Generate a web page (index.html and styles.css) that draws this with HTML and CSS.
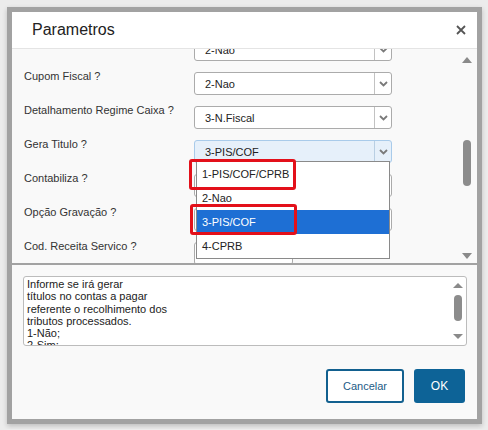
FILE: index.html
```html
<!DOCTYPE html>
<html lang="pt-BR">
<head>
    <meta charset="UTF-8">
    <meta name="viewport" content="width=device-width, initial-scale=1.0">
    <title>Parametros</title>
    <link rel="stylesheet" href="styles.css">
</head>
<body>
    <div class="dialog">
        <div class="dialog-header">
            <span class="dialog-title">Parametros</span>
            <svg class="close" width="10" height="10" viewBox="0 0 10 10"><path d="M1 1L9 9M9 1L1 9" stroke="#555" stroke-width="1.8"/></svg>
        </div>

        <div class="params">
            <div class="fields">
                <div class="field">
                    <label></label>
                    <div class="select"><span class="value">2-Nao</span><span class="caret"><svg width="9" height="6" viewBox="0 0 9 6"><path d="M1 1L4.5 4.5L8 1" fill="none" stroke="#7a7a7a" stroke-width="1.8"/></svg></span></div>
                </div>
                <div class="field">
                    <label>Cupom Fiscal ?</label>
                    <div class="select"><span class="value">2-Nao</span><span class="caret"><svg width="9" height="6" viewBox="0 0 9 6"><path d="M1 1L4.5 4.5L8 1" fill="none" stroke="#7a7a7a" stroke-width="1.8"/></svg></span></div>
                </div>
                <div class="field">
                    <label>Detalhamento Regime Caixa ?</label>
                    <div class="select"><span class="value">3-N.Fiscal</span><span class="caret"><svg width="9" height="6" viewBox="0 0 9 6"><path d="M1 1L4.5 4.5L8 1" fill="none" stroke="#7a7a7a" stroke-width="1.8"/></svg></span></div>
                </div>
                <div class="field">
                    <label>Gera Titulo ?</label>
                    <div class="select focused"><span class="value">3-PIS/COF</span><span class="caret"><svg width="9" height="6" viewBox="0 0 9 6"><path d="M1 1L4.5 4.5L8 1" fill="none" stroke="#7a7a7a" stroke-width="1.8"/></svg></span>
                        <!-- open option list -->
                        <ul class="options">
                            <li>1-PIS/COF/CPRB</li>
                            <li>2-Nao</li>
                            <li class="selected">3-PIS/COF</li>
                            <li>4-CPRB</li>
                            <span class="mark mark-1"></span>
                            <span class="mark mark-3"></span>
                        </ul>
                    </div>
                </div>
                <div class="field">
                    <label>Contabiliza ?</label>
                    <div class="select"><span class="value"></span><span class="caret"><svg width="9" height="6" viewBox="0 0 9 6"><path d="M1 1L4.5 4.5L8 1" fill="none" stroke="#7a7a7a" stroke-width="1.8"/></svg></span></div>
                </div>
                <div class="field">
                    <label>Opção Gravação ?</label>
                    <div class="select"><span class="value"></span><span class="caret"><svg width="9" height="6" viewBox="0 0 9 6"><path d="M1 1L4.5 4.5L8 1" fill="none" stroke="#7a7a7a" stroke-width="1.8"/></svg></span></div>
                </div>
                <div class="field">
                    <label>Cod. Receita Servico ?</label>
                    <div class="input short"></div>
                </div>
            </div>
            <div class="vscroll">
                <span class="arr-up"></span>
                <span class="thumb"></span>
                <span class="arr-down"></span>
            </div>
        </div>

        <div class="dialog-footer">
            <div class="help">
                <div class="help-text">Informe se irá gerar<br>títulos no contas a pagar<br>referente o recolhimento dos<br>tributos processados.<br>1-Não;<br>2-Sim;</div>
                <div class="vscroll small">
                    <span class="arr-up"></span>
                    <span class="thumb"></span>
                    <span class="arr-down"></span>
                </div>
            </div>
            <div class="actions">
                <button class="btn btn-outline">Cancelar</button>
                <button class="btn btn-primary">OK</button>
            </div>
        </div>
    </div>
</body>
</html>
```

FILE: styles.css
```css
body {
    margin: 0;
    padding: 7px 6px 5px 7px;
    background: #ececec;
    font-family: "Liberation Sans", Arial, sans-serif;
    font-size: 11px;
    color: #222;
}
.dialog {
    width: 465px;
    border: 5px solid #a2a2a2;
    background: #f9f9f9;
    box-shadow: 0 2px 5px rgba(0,0,0,0.2);
}
.dialog-header {
    height: 36px;
    background: #fff;
    border-bottom: 1px solid #e4e4e4;
    display: flex;
    align-items: center;
    justify-content: space-between;
    padding: 0 11px 0 20px;
}
.dialog-title { font-size: 16px; color: #222; }

/* scrolled parameter list */
.params {
    height: 214px;
    display: flex;
    overflow: hidden;
    border-bottom: 2px solid #a2a2a2;
}
.fields {
    flex: 1;
    margin-top: -14px;
    padding-left: 12px;
}
.field {
    height: 34px;
    display: flex;
    align-items: flex-start;
}
.field label {
    width: 170px;
    line-height: 14px;
    color: #333;
}
.select, .input {
    position: relative;
    margin-top: 3px;
    width: 198px;
    height: 23px;
    box-sizing: border-box;
    border: 1px solid #ababab;
    border-radius: 3px;
    background: #fff;
    display: flex;
    align-items: center;
}
.input.short { width: 99px; }
.select .value { flex: 1; padding-left: 10px; }
.select .caret {
    width: 16px;
    height: 100%;
    border-left: 1px solid #c2c2c2;
    display: flex;
    align-items: center;
    justify-content: center;
}
.select.focused { background: #e6f0fa; border-color: #a9cbea; }
.select.focused .caret { border-left-color: #b9cfe3; }

.options {
    position: absolute;
    top: 20px;
    left: 1px;
    width: 194px;
    margin: 0;
    padding: 0;
    list-style: none;
    box-sizing: border-box;
    border: 1px solid #8a8a8a;
    background: #fff;
    z-index: 2;
}
.options li {
    height: 24px;
    line-height: 24px;
    padding-left: 5px;
}
.options li.selected { background: #1e6fd4; color: #fff; }
.mark {
    position: absolute;
    width: 107px;
    height: 31px;
    box-sizing: border-box;
    border: 3px solid #e3101a;
    border-radius: 3px;
}
.mark-1 { left: -8px; top: -3px; }
.mark-3 { left: -7px; top: 42px; }

/* fake scrollbars */
.vscroll {
    width: 20px;
    display: flex;
    flex-direction: column;
    align-items: center;
    padding: 8px 0 4px;
}
.arr-up, .arr-down {
    width: 0;
    height: 0;
    border-left: 5px solid transparent;
    border-right: 5px solid transparent;
}
.arr-up { border-bottom: 6px solid #8a8a8a; }
.arr-down { border-top: 6px solid #8a8a8a; }
.thumb {
    width: 8px;
    height: 46px;
    margin: 77px 0 67px;
    border-radius: 4px;
    background: #8c8c8c;
}
.vscroll.small { width: 16px; padding: 6px 0; }
.vscroll.small .arr-up { border-bottom-width: 5px; }
.vscroll.small .arr-down { border-top-width: 5px; }
.vscroll.small .thumb { height: 26px; margin: 7px 0 13px; }

.dialog-footer { padding: 11px 10px 16px 11px; }
.help {
    height: 70px;
    box-sizing: border-box;
    border: 1px solid #bcbcbc;
    border-radius: 3px;
    background: #fff;
    display: flex;
    overflow: hidden;
}
.help-text {
    flex: 1;
    padding: 1px 0 0 3px;
    line-height: 12.3px;
    overflow: hidden;
}
.actions {
    display: flex;
    justify-content: flex-end;
    gap: 10px;
    margin-top: 23px;
    padding-right: 2px;
}
.btn {
    height: 34px;
    border-radius: 3px;
    font-family: "Liberation Sans", Arial, sans-serif;
    font-size: 11px;
    cursor: pointer;
}
.btn-outline {
    width: 78px;
    background: #fff;
    border: 2px solid #12608f;
    color: #1c5b86;
}
.btn-primary {
    width: 51px;
    background: #0d6397;
    border: none;
    color: #fff;
    font-size: 12px;
}
```
